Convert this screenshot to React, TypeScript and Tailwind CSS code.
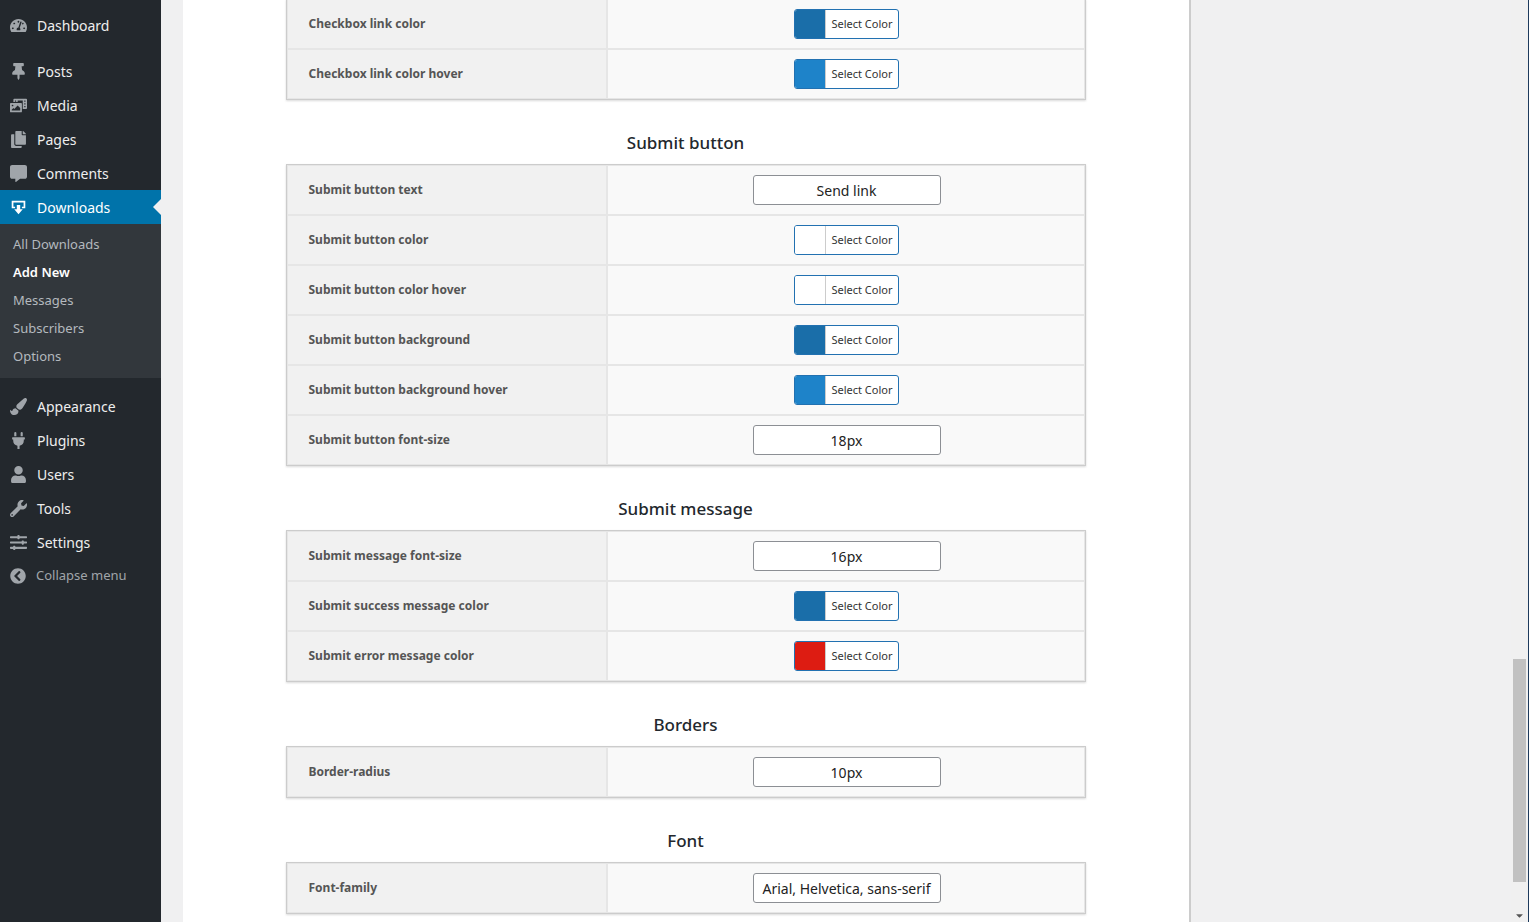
import { ReactElement } from "react";
import {
  FaTachometerAlt,
  FaThumbtack,
  FaPhotoVideo,
  FaCopy,
  FaCommentAlt,
  FaPaintBrush,
  FaPlug,
  FaUser,
  FaWrench,
  FaSlidersH,
  FaChevronCircleLeft,
  FaCaretDown,
} from "react-icons/fa";

type Row = { label: string; kind: "color" | "text"; value: string };

const ColorPick = ({ color }: { color: string }) => (
  <div className="flex h-[30px] w-[105px] overflow-hidden rounded-[3px] border border-[#2271b1] bg-white">
    <div className="w-[31px] border-r border-[#ccc]" style={{ background: color }} />
    <div className="flex flex-1 items-center justify-center text-[11px] text-[#333]">Select Color</div>
  </div>
);

const Table = ({ rows, className = "" }: { rows: Row[]; className?: string }) => (
  <div className={`mx-auto w-[800px] border border-[#ccc] bg-[#e6e6e6] p-[1px] shadow-[0_1px_2px_rgba(0,0,0,0.15)] ${className}`}>
    {rows.map((r, i) => (
      <div
        key={r.label}
        className={`flex h-[48px] gap-[2px] ${i < rows.length - 1 ? "mb-[2px]" : ""}`}
      >
        <div className="flex w-[318px] items-center bg-[#f1f1f1] pl-[21px] text-[12px] font-bold text-[#555]">
          {r.label}
        </div>
        <div className="flex flex-1 items-center justify-center bg-[#f9f9f9] pl-[2px]">
          {r.kind === "color" ? (
            <ColorPick color={r.value} />
          ) : (
            <div className="flex h-[30px] w-[188px] items-center justify-center rounded-[3px] border border-[#8c8f94] bg-white text-[14px] text-[#222]">
              {r.value}
            </div>
          )}
        </div>
      </div>
    ))}
  </div>
);

const Heading = ({ text }: { text: string }) => (
  <h2 className="mt-[33px] mb-[11px] h-[20px] text-center font-['Open_Sans'] text-[17px] leading-[20px] font-medium text-[#23282d]">
    {text}
  </h2>
);

const menu = [
  { icon: FaThumbtack, label: "Posts" },
  { icon: FaPhotoVideo, label: "Media" },
  { icon: FaCopy, label: "Pages" },
  { icon: FaCommentAlt, label: "Comments" },
];
const menu2 = [
  { icon: FaPaintBrush, label: "Appearance" },
  { icon: FaPlug, label: "Plugins" },
  { icon: FaUser, label: "Users" },
  { icon: FaWrench, label: "Tools" },
  { icon: FaSlidersH, label: "Settings" },
];

const MenuItem = ({ icon: Icon, label }: { icon: any; label: string }) => (
  <div className="flex h-[34px] items-center text-[14px] text-[#eee]">
    <Icon className="ml-[10px] mr-[10px] size-[17px] text-[#a0a5aa]" />
    {label}
  </div>
);

const App = (): ReactElement => {
  const blue = "#1a6ea9";
  const blueH = "#1e83c9";
  return (
    <div className="flex h-[922px] overflow-hidden bg-[#f0f0f1] font-['Open_Sans']">
      <aside className="w-[161px] shrink-0 bg-[#23282d]">
        <div className="pt-[8px]">
          <MenuItem icon={FaTachometerAlt} label="Dashboard" />
        </div>
        <div className="mt-[12px]">
          {menu.map((m) => (
            <MenuItem key={m.label} {...m} />
          ))}
        </div>
        <div className="relative flex h-[34px] items-center bg-[#0073aa] text-[14px] text-white">
          <svg viewBox="0 0 20 20" className="ml-[10px] mr-[10px] size-[17px]" fill="white">
            <path d="M2 2h16v9h-4v-2h2V4H4v5h2v2H2z M8 7h4v5h3l-5 6-5-6h3z" />
          </svg>
          Downloads
          <span className="absolute right-0 top-[9px] h-0 w-0 border-y-8 border-r-8 border-y-transparent border-r-[#f0f0f1]" />
        </div>
        <div className="bg-[#32373c] py-[7px] text-[13px]">
          {["All Downloads", "Add New", "Messages", "Subscribers", "Options"].map((s) => (
            <div key={s} className={`flex h-[28px] items-center pl-[13px] ${s === "Add New" ? "font-semibold text-white" : "text-[#b4b9be]"}`}>
              {s}
            </div>
          ))}
        </div>
        <div className="mt-[11px]">
          {menu2.map((m) => (
            <MenuItem key={m.label} {...m} />
          ))}
          <div className="flex h-[34px] items-center text-[13px] text-[#a0a5aa]">
            <FaChevronCircleLeft className="ml-[10px] mr-[10px] size-[16px]" />
            Collapse menu
          </div>
        </div>
      </aside>
      <div className="w-[22px] shrink-0" />
      <main className="w-[1008px] shrink-0 border-r-2 border-[#ccc] bg-white font-['Liberation_Sans']">
        <div className="pr-[1px]">
          <Table
            className="-mt-[1px] border-t-0"
            rows={[
              { label: "Checkbox link color", kind: "color", value: blue },
              { label: "Checkbox link color hover", kind: "color", value: blueH },
            ]}
          />
          <Heading text="Submit button" />
          <Table
            rows={[
              { label: "Submit button text", kind: "text", value: "Send link" },
              { label: "Submit button color", kind: "color", value: "#fff" },
              { label: "Submit button color hover", kind: "color", value: "#fff" },
              { label: "Submit button background", kind: "color", value: blue },
              { label: "Submit button background hover", kind: "color", value: blueH },
              { label: "Submit button font-size", kind: "text", value: "18px" },
            ]}
          />
          <Heading text="Submit message" />
          <Table
            rows={[
              { label: "Submit message font-size", kind: "text", value: "16px" },
              { label: "Submit success message color", kind: "color", value: blue },
              { label: "Submit error message color", kind: "color", value: "#dd1c12" },
            ]}
          />
          <Heading text="Borders" />
          <Table rows={[{ label: "Border-radius", kind: "text", value: "10px" }]} />
          <Heading text="Font" />
          <Table rows={[{ label: "Font-family", kind: "text", value: "Arial, Helvetica, sans-serif" }]} />
        </div>
      </main>
      <div className="flex-1" />
      <div className="relative w-[17px] shrink-0 bg-[#f0f0f0]">
        <div className="absolute left-[2px] top-[659px] h-[223px] w-[13px] bg-[#c1c1c1]" />
        <FaCaretDown className="absolute bottom-[1px] left-[3px] size-[11px] text-[#555]" />
      </div>
      <div className="w-[1px] shrink-0 bg-[#1d3a5c]" />
    </div>
  );
};

export default App;
